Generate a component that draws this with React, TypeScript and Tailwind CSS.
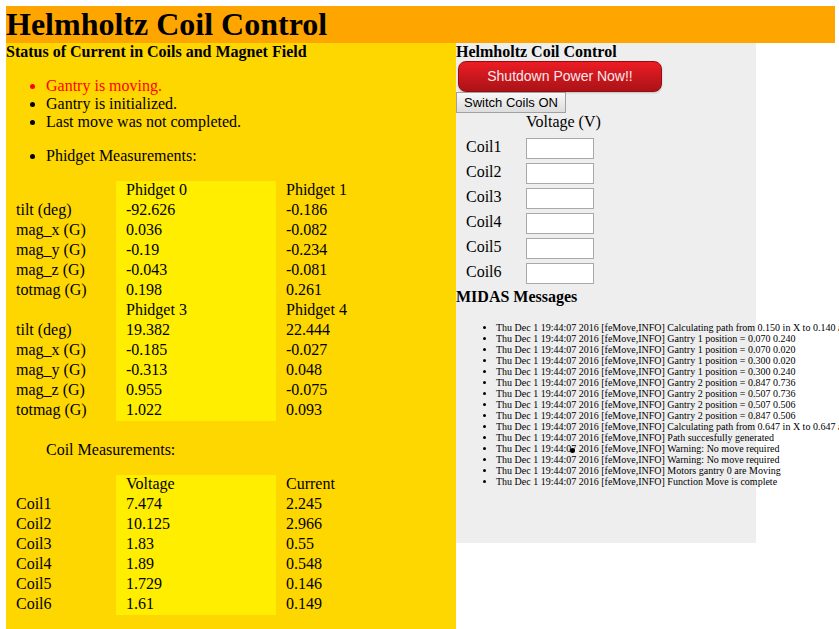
const phidgetGroups = [
  {
    heads: ["Phidget 0", "Phidget 1"],
    rows: [
      ["tilt (deg)", "-92.626", "-0.186"],
      ["mag_x (G)", "0.036", "-0.082"],
      ["mag_y (G)", "-0.19", "-0.234"],
      ["mag_z (G)", "-0.043", "-0.081"],
      ["totmag (G)", "0.198", "0.261"],
    ],
  },
  {
    heads: ["Phidget 3", "Phidget 4"],
    rows: [
      ["tilt (deg)", "19.382", "22.444"],
      ["mag_x (G)", "-0.185", "-0.027"],
      ["mag_y (G)", "-0.313", "0.048"],
      ["mag_z (G)", "0.955", "-0.075"],
      ["totmag (G)", "1.022", "0.093"],
    ],
  },
];

const coilGroups = [
  {
    heads: ["Voltage", "Current"],
    rows: [
      ["Coil1", "7.474", "2.245"],
      ["Coil2", "10.125", "2.966"],
      ["Coil3", "1.83", "0.55"],
      ["Coil4", "1.89", "0.548"],
      ["Coil5", "1.729", "0.146"],
      ["Coil6", "1.61", "0.149"],
    ],
  },
];

const coils = ["Coil1", "Coil2", "Coil3", "Coil4", "Coil5", "Coil6"];

const messages = [
  "Calculating path from 0.150 in X to 0.140 and",
  "Gantry 1 position = 0.070 0.240",
  "Gantry 1 position = 0.070 0.020",
  "Gantry 1 position = 0.300 0.020",
  "Gantry 1 position = 0.300 0.240",
  "Gantry 2 position = 0.847 0.736",
  "Gantry 2 position = 0.507 0.736",
  "Gantry 2 position = 0.507 0.506",
  "Gantry 2 position = 0.847 0.506",
  "Calculating path from 0.647 in X to 0.647 and",
  "Path succesfully generated",
  "Warning: No move required",
  "Warning: No move required",
  "Motors gantry 0 are Moving",
  "Function Move is complete",
];

type Group = { heads: string[]; rows: string[][] };

function MeasurementTable({ groups, label }: { groups: Group[]; label: string }) {
  return (
    <table aria-label={label} className="w-[430px] table-fixed border-collapse text-left">
      <colgroup>
        <col className="w-[110px]" />
        <col className="w-40 bg-[#ffee00]" />
        <col className="w-40" />
      </colgroup>
      {groups.map((group) => (
        <tbody key={group.heads[0]}>
          <tr className="h-5 align-top">
            <td className="p-0" />
            {group.heads.map((head) => (
              <th key={head} scope="col" className="py-0 pr-0 pl-2.5 font-normal">
                {head}
              </th>
            ))}
          </tr>
          {group.rows.map(([name, first, second]) => (
            <tr key={name} className="h-5 align-top">
              <th scope="row" className="py-0 pr-0 pl-2.5 font-normal">{name}</th>
              <td className="py-0 pr-0 pl-2.5">{first}</td>
              <td className="py-0 pr-0 pl-2.5">{second}</td>
            </tr>
          ))}
        </tbody>
      ))}
    </table>
  );
}

function StatusPanel() {
  return (
    <section className="w-[450px] shrink-0 bg-[#ffd700]">
      <h2 className="font-bold">Status of Current in Coils and Magnet Field</h2>
      <ul className="my-4 list-disc pl-10">
        <li className="text-[#ff0000]">Gantry is moving.</li>
        <li>Gantry is initialized.</li>
        <li>Last move was not completed.</li>
      </ul>
      <ul className="my-4 list-disc pl-10">
        <li>Phidget Measurements:</li>
      </ul>
      <MeasurementTable groups={phidgetGroups} label="Phidget measurements" />
      <p className="mt-5 mb-4 pl-10">Coil Measurements:</p>
      <MeasurementTable groups={coilGroups} label="Coil measurements" />
    </section>
  );
}

function ControlPanel() {
  return (
    <section className="h-[500px] w-[300px] shrink-0 bg-[#eeeeee]">
      <h2 className="font-bold">Helmholtz Coil Control</h2>
      <div className="flex flex-col items-start">
        <button
          type="button"
          className="mx-0.5 h-[31px] w-[204px] rounded-lg border border-[#980c10] bg-linear-to-b from-[#ed1c24] to-[#aa1317] pb-0.5 font-['Liberation_Sans',Arial,sans-serif] text-sm text-[#fae7e9] shadow-[0_1px_2px_rgba(0,0,0,0.2)]"
        >
          Shutdown Power Now!!
        </button>
        <button
          type="button"
          className="h-[21px] w-[110px] border border-[#a0a0a0] bg-linear-to-b from-[#f8f8f8] to-[#dddddd] font-['Liberation_Sans',Arial,sans-serif] text-[13px] leading-none"
        >
          Switch Coils ON
        </button>
      </div>
      <table aria-label="Coil voltages" className="table-fixed border-collapse text-left">
        <colgroup>
          <col className="w-[60px]" />
          <col className="w-[100px]" />
        </colgroup>
        <tbody>
          <tr className="h-[25px] align-top">
            <td className="p-0" />
            <th scope="col" className="py-0 pr-0 pl-2.5 font-normal">Voltage (V)</th>
          </tr>
          {coils.map((coil) => (
            <tr key={coil} className="h-[25px] align-top">
              <th scope="row" className="py-0 pr-0 pl-2.5 font-normal">
                <label htmlFor={coil}>{coil}</label>
              </th>
              <td className="py-0 pr-0 pl-2.5">
                <input
                  id={coil}
                  type="text"
                  className="block h-[21px] w-[68px] border border-[#a9a9a9] bg-white px-0.5 text-[13px]"
                />
              </td>
            </tr>
          ))}
        </tbody>
      </table>
      <h2 className="font-bold">MIDAS Messages</h2>
      <div className="relative">
        <ul className="my-4 list-disc pl-10 text-[10px] leading-[11px] whitespace-nowrap">
          {messages.map((message, index) => (
            <li key={index}>Thu Dec 1 19:44:07 2016 [feMove,INFO] {message}</li>
          ))}
        </ul>
        <span className="absolute top-[126px] left-[114px] size-[5px] rounded-full bg-black" />
      </div>
    </section>
  );
}

export default function App() {
  return (
    <div className="flex min-h-screen flex-col overflow-x-clip bg-white pt-1.5 pr-1 pl-1.5 font-['Liberation_Serif','Times_New_Roman',serif] text-base leading-[18px] text-black">
      <header className="bg-[#ffa500]">
        <h1 className="text-[32px] leading-[37px] font-bold">Helmholtz Coil Control</h1>
      </header>
      <main className="flex grow">
        <StatusPanel />
        <ControlPanel />
      </main>
    </div>
  );
}
